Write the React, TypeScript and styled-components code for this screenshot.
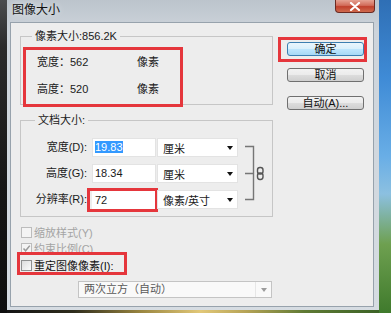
import React from "react";
import styled, { createGlobalStyle } from "styled-components";

const GlobalStyle = createGlobalStyle`
    html, body {
        margin: 0;
        padding: 0;
    }
    body {
        background: #1b1b1b;
        font-family: "Liberation Sans", "Noto Sans CJK SC", sans-serif;
        font-size: 11px;
        color: #1a1a1a;
    }
`;

const App = () => {
    return (
        <>
            <GlobalStyle />
            <Screen>
                <LeftShade />
                <WindowColumn>
                    <Window>
                        <TitleBar>
                            <TitleText>图像大小</TitleText>
                            <CloseButton>
                                <svg width="12" height="9" viewBox="0 0 12 9">
                                    <path d="M2 1 L10 8 M10 1 L2 8" stroke="#fff" strokeWidth="2.2" strokeLinecap="round" />
                                </svg>
                            </CloseButton>
                        </TitleBar>
                        <Client>
                            <MainColumn>
                                <Group>
                                    <GroupTitle $indent={11}>像素大小:856.2K</GroupTitle>
                                    <PixelMarker>
                                        <PixelGrid>
                                            <span>宽度：</span>
                                            <span>562</span>
                                            <span>像素</span>
                                            <span>高度：</span>
                                            <span>520</span>
                                            <span>像素</span>
                                        </PixelGrid>
                                    </PixelMarker>
                                </Group>

                                <DocGroup>
                                    <GroupTitle $indent={14}>文档大小:</GroupTitle>
                                    <DocGrid>
                                        <FieldLabel>宽度(D):</FieldLabel>
                                        <TextField><Selected>19.83</Selected></TextField>
                                        <UnitSelect>厘米<Caret /></UnitSelect>
                                        <LinkColumn>
                                            <svg width="22" height="71" viewBox="0 0 22 71">
                                                <path d="M0 8.5 H8.5 V61.5 H0 M0 35.5 H8.5" stroke="#767676" strokeWidth="1.4" fill="none" />
                                                <rect x="12.5" y="29.5" width="5.5" height="6.5" rx="2.4" stroke="#555" strokeWidth="1.4" fill="none" />
                                                <rect x="12.5" y="35" width="5.5" height="6.5" rx="2.4" stroke="#555" strokeWidth="1.4" fill="none" />
                                            </svg>
                                        </LinkColumn>

                                        <FieldLabel>高度(G):</FieldLabel>
                                        <TextField>18.34</TextField>
                                        <UnitSelect>厘米<Caret /></UnitSelect>

                                        <FieldLabel>分辨率(R):</FieldLabel>
                                        <RatioMarker>
                                            <RatioField>72</RatioField>
                                        </RatioMarker>
                                        <UnitSelect>像素/英寸<Caret /></UnitSelect>
                                    </DocGrid>
                                </DocGroup>

                                <CheckList>
                                    <CheckRow $disabled>
                                        <Box $disabled />
                                        缩放样式(Y)
                                    </CheckRow>
                                    <CheckRow $disabled>
                                        <Box $disabled>
                                            <svg width="9" height="9" viewBox="0 0 9 9">
                                                <path d="M1.5 4.5 L3.6 6.8 L7.8 1.6" stroke="#9a9a9a" strokeWidth="1.5" fill="none" />
                                            </svg>
                                        </Box>
                                        约束比例(C)
                                    </CheckRow>
                                    <ResampleMarker>
                                        <CheckRow>
                                            <Box />
                                            重定图像像素(I):
                                        </CheckRow>
                                    </ResampleMarker>
                                </CheckList>

                                <ResampleSelect>
                                    <span>两次立方（自动）</span>
                                    <ArrowCell><Caret $muted /></ArrowCell>
                                </ResampleSelect>
                            </MainColumn>

                            <SideColumn>
                                <OkMarker>
                                    <Button $primary>确定</Button>
                                </OkMarker>
                                <Button $top={6}>取消</Button>
                                <Button $top={14}>自动(A)...</Button>
                            </SideColumn>
                        </Client>
                    </Window>
                    <Ground />
                </WindowColumn>
                <Sky />
            </Screen>
        </>
    );
};

const Screen = styled.div`
    display: flex;
    width: 391px;
    height: 313px;
    overflow: hidden;
`;

const LeftShade = styled.div`
    flex: none;
    width: 7px;
    background: linear-gradient(180deg, #4a4c4e 0%, #2b2b2b 15%, #161616 60%, #0e0e0e 100%);
`;

const WindowColumn = styled.div`
    flex: none;
    display: flex;
    flex-direction: column;
    width: 372px;
`;

const Window = styled.div`
    display: flex;
    flex-direction: column;
    height: 310px;
    box-sizing: border-box;
    padding: 0 5px 3px 3px;
    background: linear-gradient(180deg, #bcc4cc 0%, #cdd4db 10%, #d6dce2 100%);
`;

const TitleBar = styled.div`
    display: flex;
    justify-content: space-between;
    align-items: flex-start;
    height: 22px;
    padding-left: 2px;
`;

const TitleText = styled.span`
    font-size: 12px;
    line-height: 20px;
    color: #111;
    text-shadow: 0 0 6px rgba(255, 255, 255, 0.8);
`;

const CloseButton = styled.div`
    display: flex;
    align-items: center;
    justify-content: center;
    width: 40px;
    height: 13px;
    margin-right: -1px;
    box-sizing: border-box;
    border: 1px solid #6b2a22;
    border-top: 0;
    border-radius: 0 0 4px 4px;
    background: linear-gradient(180deg, #e5a293 0%, #d26c5a 45%, #c0402c 55%, #cf6a4e 100%);
`;

const Client = styled.div`
    flex: 1;
    display: flex;
    box-sizing: border-box;
    border: 1px solid #97a2ac;
    background: #ededed;
    padding: 6px 0 0 9px;
`;

const MainColumn = styled.div`
    display: flex;
    flex-direction: column;
    width: 253px;
`;

const SideColumn = styled.div`
    display: flex;
    flex-direction: column;
    align-items: flex-start;
    margin-left: 14px;
`;

const Group = styled.fieldset`
    margin: 0;
    padding: 0;
    min-width: 0;
    width: 253px;
    box-sizing: border-box;
    border: 1px solid #c6c6c6;
`;

const DocGroup = styled(Group)`
    margin-top: 8px;
`;

const GroupTitle = styled.legend<{ $indent: number }>`
    margin-left: ${p => p.$indent}px;
    padding: 0 3px;
    font-size: 11px;
    line-height: 14px;
`;

const Marker = styled.div`
    box-sizing: border-box;
    border: 3px solid #e5363c;
`;

const PixelMarker = styled(Marker)`
    width: 160px;
    margin: 4px 0 -3px 2px;
    padding: 5px 0 8px 11px;
`;

const PixelGrid = styled.div`
    display: grid;
    grid-template-columns: 33px 67px auto;
    grid-auto-rows: 14px;
    row-gap: 13px;
    align-items: center;
    line-height: 14px;
`;

const DocGrid = styled.div`
    display: grid;
    grid-template-columns: 68px 67px 82px 31px;
    grid-template-rows: repeat(3, 19px);
    row-gap: 7px;
    padding: 11px 0 7px 0;
`;

const FieldLabel = styled.span`
    padding-right: 2px;
    text-align: right;
    line-height: 19px;
    white-space: nowrap;
`;

const TextField = styled.div`
    margin-left: 3px;
    width: 64px;
    height: 19px;
    box-sizing: border-box;
    padding-left: 2px;
    border: 1px solid #e3e3e3;
    background: #fff;
    line-height: 17px;
`;

const Selected = styled.span`
    background: #3399ff;
    color: #fff;
`;

const RatioMarker = styled(Marker)`
    align-self: start;
    width: 71px;
    height: 24px;
    margin: -2px 0 0 -2px;
`;

const RatioField = styled(TextField)`
    margin-left: 2px;
    width: 63px;
    height: 18px;
    border-color: #fff;
    line-height: 16px;
`;

const UnitSelect = styled.div`
    display: flex;
    align-items: center;
    justify-content: space-between;
    margin-left: 1px;
    width: 81px;
    height: 19px;
    box-sizing: border-box;
    padding: 0 4px 0 5px;
    border: 1px solid #e3e3e3;
    background: #fff;
`;

const Caret = styled.span<{ $muted?: boolean }>`
    width: 0;
    height: 0;
    border-left: 3px solid transparent;
    border-right: 3px solid transparent;
    border-top: 4px solid ${p => (p.$muted ? "#9c9c9c" : "#111")};
`;

const LinkColumn = styled.div`
    grid-column: 4;
    grid-row: 1 / span 3;
    padding-left: 7px;
`;

const CheckList = styled.div`
    display: flex;
    flex-direction: column;
    margin-top: 7px;
`;

const CheckRow = styled.div<{ $disabled?: boolean }>`
    display: flex;
    align-items: center;
    gap: 2px;
    height: 16px;
    padding-left: 1px;
    color: ${p => (p.$disabled ? "#a4a4a4" : "#111")};
    font-size: 11px;
`;

const Box = styled.div<{ $disabled?: boolean }>`
    display: flex;
    align-items: center;
    justify-content: center;
    width: 11px;
    height: 11px;
    box-sizing: border-box;
    border: 1px solid ${p => (p.$disabled ? "#bcbcbc" : "#8e8f8f")};
    background: ${p => (p.$disabled ? "#f4f4f4" : "linear-gradient(135deg, #dcdcdc, #fbfbfb)")};
`;

const ResampleMarker = styled(Marker)`
    width: 110px;
    height: 23px;
    margin: -4px 0 0 -3px;
    padding-top: 3px;

    ${CheckRow} {
        height: 14px;
    }
`;

const ResampleSelect = styled.div`
    display: flex;
    align-items: stretch;
    justify-content: space-between;
    margin: 6px 0 0 58px;
    width: 194px;
    height: 17px;
    box-sizing: border-box;
    padding-left: 5px;
    border: 1px solid #c4c4c4;
    background: #f9f9f9;
    color: #5a5a5a;
    line-height: 15px;
`;

const ArrowCell = styled.div`
    display: flex;
    align-items: center;
    justify-content: center;
    width: 15px;
    border-left: 1px solid #e6e6e6;
`;

const OkMarker = styled(Marker)`
    margin: 8px 0 0 -9px;
    padding: 2px 0 3px 6px;
`;

const Button = styled.div<{ $primary?: boolean; $top?: number }>`
    display: flex;
    align-items: center;
    justify-content: center;
    margin-top: ${p => p.$top ?? 0}px;
    width: 77px;
    height: 14px;
    box-sizing: border-box;
    border: 1px solid ${p => (p.$primary ? "#3c7fb1" : "#707070")};
    border-radius: 3px;
    background: ${p =>
        p.$primary
            ? "linear-gradient(180deg, #eaf6fd 0%, #d9f0fc 50%, #bee6fd 51%, #a7d9f5 100%)"
            : "linear-gradient(180deg, #f2f2f2 0%, #ebebeb 50%, #dddddd 51%, #cfcfcf 100%)"};
    font-size: 11px;
    line-height: 12px;
    color: #111;
`;

const Ground = styled.div`
    flex: 1;
    background: linear-gradient(90deg, #141414 0%, #2e2c1c 18%, #9a8640 36%, #e2c878 52%, #b7a457 64%, #5f7a34 80%, #3c6326 100%);
`;

const Sky = styled.div`
    flex: 1;
    background: linear-gradient(180deg, #2f6fb5 0%, #3f8bd6 25%, #69aee6 50%, #8cc0e0 62%, #6ea050 78%, #3f7a2c 100%);
`;

export default App;
